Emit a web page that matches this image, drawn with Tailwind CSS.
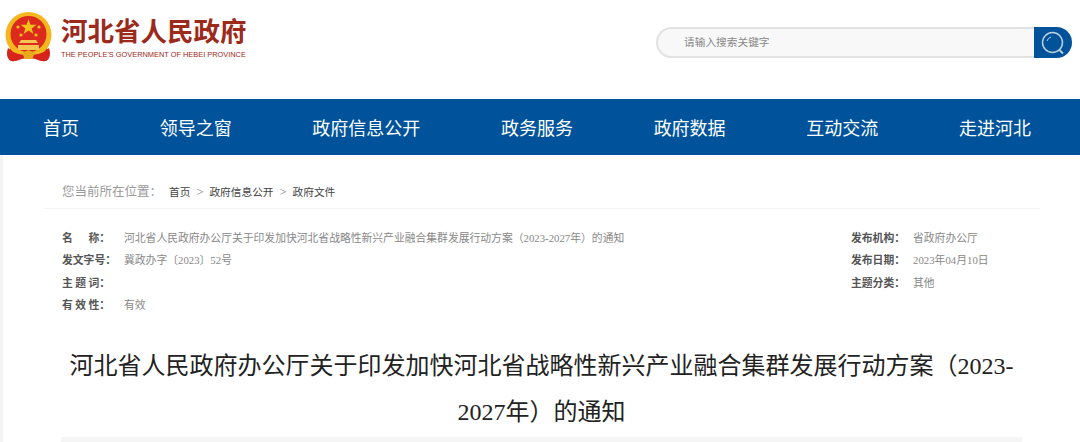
<!DOCTYPE html>
<html lang="zh-CN">
<head>
    <meta charset="UTF-8">
    <title>河北省人民政府</title>
    <script src="https://cdn.jsdelivr.net/npm/@tailwindcss/browser@4"></script>
</head>
<body class="bg-white font-['Liberation_Serif','Noto_Sans_CJK_SC',serif] overflow-hidden h-[442px]">
    <!-- 页头 -->
    <header class="h-[99px] flex justify-between pl-[5px] pr-2">
        <div class="flex items-start pt-3">
            <svg width="47" height="50" viewBox="0 0 47 50">
                <path d="M5 36 C2 42 3 47 6 49 C12 50 16 46 23.5 46 C31 46 35 50 41 49 C44 47 45 42 42 36 Z" fill="#d6241c"/>
                <circle cx="23.5" cy="23" r="23" fill="#f4b71d"/>
                <circle cx="23.5" cy="22" r="18" fill="#dd2a1e"/>
                <polygon points="23.5,7 25.4,12.8 31.5,12.8 26.6,16.4 28.5,22 23.5,18.6 18.5,22 20.4,16.4 15.5,12.8 21.6,12.8" fill="#f8c21d"/>
                <circle cx="13" cy="15" r="1.6" fill="#f8c21d"/>
                <circle cx="34" cy="15" r="1.6" fill="#f8c21d"/>
                <circle cx="16" cy="23" r="1.6" fill="#f8c21d"/>
                <circle cx="31" cy="23" r="1.6" fill="#f8c21d"/>
                <path d="M16 28 H31 L33 31 H14 Z M13 33 H34 V38 H13 Z" fill="#f6c453"/>
                <path d="M3 36 C1 42 2 47 6 49 C12 50 16 45 23.5 45 C31 45 35 50 41 49 C45 47 46 42 44 36 C38 42 31 43 23.5 43 C16 43 9 42 3 36 Z" fill="#d6241c"/>
                <path d="M17 41 L23.5 38 L30 41 L27 47 H20 Z" fill="#e9a91c"/>
            </svg>
            <div class="ml-[9px] w-[186px]">
                <div class="text-[26.5px] leading-[38px] font-bold text-[#9c2a1b] font-['Noto_Sans_CJK_SC',sans-serif] whitespace-nowrap -mt-[1px]">河北省人民政府</div>
                <div class="text-[7.4px] leading-[10px] mt-[1px] text-[#9c2a1b] font-['Liberation_Sans',sans-serif] whitespace-nowrap">THE PEOPLE'S GOVERNMENT OF HEBEI PROVINCE</div>
            </div>
        </div>
        <div class="flex h-[31px] w-[416px] mt-[27px]">
            <div class="flex-1 flex items-center pl-[26px] bg-[#f8f8f8] border-2 border-r-0 border-[#e2e2e2] rounded-l-full text-[10.7px] text-[#888] font-['Noto_Sans_CJK_SC',sans-serif]">请输入搜索关键字</div>
            <div class="w-[38px] flex items-center justify-center bg-[#00539a] rounded-r-full">
                <svg width="24" height="24" viewBox="0 0 24 24" fill="none" stroke="#b9cfe2" stroke-width="1.5">
                    <circle cx="11.5" cy="11.5" r="10"/>
                    <path d="M18.5 19 L22 22.5" stroke-width="2"/>
                    <path d="M6 10 A6 6 0 0 1 10 6" stroke-width="1"/>
                </svg>
            </div>
        </div>
    </header>

    <!-- 导航 -->
    <nav class="h-14 bg-[#00539a] flex items-center justify-between pl-[43px] pr-[49px] text-white text-lg font-['Noto_Sans_CJK_SC',sans-serif]">
        <span>首页</span>
        <span>领导之窗</span>
        <span>政府信息公开</span>
        <span>政务服务</span>
        <span>政府数据</span>
        <span>互动交流</span>
        <span>走进河北</span>
    </nav>

    <main class="h-[287px] border-l-[3px] border-[#f5f5f5]">
        <!-- 位置 -->
        <div class="ml-[40px] w-[997px] h-[54px] pl-[19px] pt-[21px] border-b border-[#f5f5f5] flex items-center text-[10.7px] text-[#444]">
            <span class="text-[12.5px] text-[#999] w-[107px]">您当前所在位置：</span>
            <span>首页</span>
            <span class="w-[19px] text-center text-[13px] text-[#888]">&gt;</span>
            <span>政府信息公开</span>
            <span class="w-[19px] text-center text-[13px] text-[#888]">&gt;</span>
            <span>政府文件</span>
        </div>

        <!-- 信息 -->
        <div class="ml-[59px] mt-[18px] flex text-[10.8px] leading-[22.3px]">
            <div class="w-[789px] shrink-0">
                <div class="flex">
                    <span class="w-[48px] flex justify-between font-bold text-[#555]"><span>名</span><span class="whitespace-nowrap">称：</span></span>
                    <span class="ml-[14px] text-[#888] whitespace-nowrap">河北省人民政府办公厅关于印发加快河北省战略性新兴产业融合集群发展行动方案（2023-2027年）的通知</span>
                </div>
                <div class="flex">
                    <span class="w-[48px] whitespace-nowrap font-bold text-[#555]">发文字号：</span>
                    <span class="ml-[14px] text-[#888]">冀政办字〔2023〕52号</span>
                </div>
                <div class="flex">
                    <span class="w-[48px] h-[22.3px] flex justify-between font-bold text-[#555]"><span>主</span><span>题</span><span class="whitespace-nowrap">词：</span></span>
                </div>
                <div class="flex">
                    <span class="w-[48px] flex justify-between font-bold text-[#555]"><span>有</span><span>效</span><span class="whitespace-nowrap">性：</span></span>
                    <span class="ml-[14px] text-[#888]">有效</span>
                </div>
            </div>
            <div>
                <div class="flex">
                    <span class="w-[62px] whitespace-nowrap font-bold text-[#555]">发布机构：</span>
                    <span class="text-[#888]">省政府办公厅</span>
                </div>
                <div class="flex">
                    <span class="w-[62px] whitespace-nowrap font-bold text-[#555]">发布日期：</span>
                    <span class="text-[#888]">2023年04月10日</span>
                </div>
                <div class="flex">
                    <span class="w-[62px] whitespace-nowrap font-bold text-[#555]">主题分类：</span>
                    <span class="text-[#888]">其他</span>
                </div>
            </div>
        </div>

        <!-- 标题 -->
        <h1 class="ml-[58px] mt-[27px] w-[961px] text-center text-2xl leading-[46px] text-[#222] font-['Liberation_Serif','Noto_Sans_CJK_SC',serif]">河北省人民政府办公厅关于印发加快河北省战略性新兴产业融合集群发展行动方案（2023-2027年）的通知</h1>
        <div class="ml-[58px] mt-[2px] w-[961px] h-2 bg-[#f5f5f5]"></div>
    </main>
</body>
</html>
